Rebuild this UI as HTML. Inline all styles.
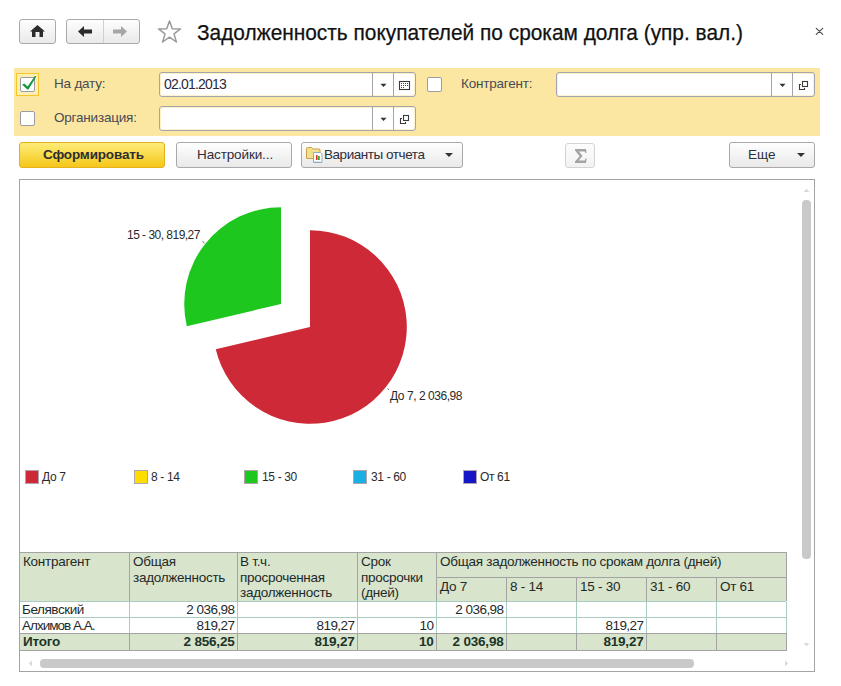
<!DOCTYPE html>
<html><head><meta charset="utf-8">
<style>
*{box-sizing:border-box;margin:0;padding:0}
html,body{width:841px;height:686px;overflow:hidden;background:#fff;font-family:"Liberation Sans",sans-serif;color:#333}
.a{position:absolute}
.btn{position:absolute;border:1px solid #a9a9a9;border-radius:3px;background:linear-gradient(#fefefe,#e9e9e9)}
.t{position:absolute;white-space:nowrap;line-height:1}
.cb{position:absolute;width:15px;height:15px;border:1px solid #9c9ca4;border-radius:2px;background:#fff}
.inp{position:absolute;height:25px;border:1px solid #a4a4ac;border-radius:3px;background:#fff;box-shadow:inset 1px 1px 0 #fdf1c4, inset -1px -1px 0 #fdf3cc}
.sep{position:absolute;width:1px;background:#a4a4ac}
</style></head><body>


<div class="btn" style="left:19px;top:19px;width:37px;height:25px"></div>
<svg class="a" style="left:30px;top:25px" width="15" height="12" viewBox="0 0 15 12">
<path d="M7.5 0 L15 6.5 L13 6.5 L13 12 L9.5 12 L9.5 7 L5.5 7 L5.5 12 L2 12 L2 6.5 L0 6.5 Z" fill="#2b2b2b"/>
</svg>
<div class="btn" style="left:66px;top:19px;width:74px;height:25px"></div>
<div class="a" style="left:103px;top:20px;width:1px;height:23px;background:#d0d0d0"></div>
<svg class="a" style="left:78px;top:26px" width="14" height="11" viewBox="0 0 14 11">
<path d="M0 5.5 L6 0 L6 3.5 L14 3.5 L14 7.5 L6 7.5 L6 11 Z" fill="#2b2b2b"/>
</svg>
<svg class="a" style="left:113px;top:26px" width="14" height="11" viewBox="0 0 14 11">
<path d="M14 5.5 L8 0 L8 3.5 L0 3.5 L0 7.5 L8 7.5 L8 11 Z" fill="#a6a6a6"/>
</svg>
<svg class="a" style="left:157px;top:19px" width="25" height="24" viewBox="0 0 25 24">
<path d="M12.5 2 L15.3 9.8 L23.5 9.9 L17 14.9 L19.4 23 L12.5 18.2 L5.6 23 L8 14.9 L1.5 9.9 L9.7 9.8 Z" fill="none" stroke="#9a9a9a" stroke-width="1.5" stroke-linejoin="round"/>
</svg>
<div class="t" style="left:197px;top:22px;font-size:22px;color:#111;transform:scaleX(0.948);transform-origin:0 0;-webkit-text-stroke:0.25px #111">Задолженность покупателей по срокам долга (упр. вал.)</div>
<svg class="a" style="left:815px;top:27px" width="9" height="9" viewBox="0 0 9 9">
<path d="M1.3 1.4 L7.7 7.4 M7.7 1.4 L1.3 7.4" stroke="#505050" stroke-width="1.25" stroke-linecap="round"/>
</svg>

<div class="a" style="left:14px;top:68px;width:806px;height:68px;background:#fbe7a1"></div>
<div class="a" style="left:16px;top:73px;width:23px;height:23px;border:1px solid #f6c52a;background:#fdeeb4"></div>
<div class="cb" style="left:20px;top:77px"></div>
<div class="cb" style="left:20px;top:111px"></div>
<div class="cb" style="left:427px;top:77px"></div>
<div class="t" style="left:54px;top:77px;font-size:13.5px;color:#4a4a55;letter-spacing:-0.2px">На дату:</div>
<div class="t" style="left:54px;top:111px;font-size:13.5px;color:#4a4a55;letter-spacing:-0.2px">Организация:</div>
<div class="t" style="left:461px;top:77px;font-size:13.5px;color:#4a4a55;letter-spacing:-0.2px">Контрагент:</div>
<div class="inp" style="left:159px;top:72px;width:257px"></div>
<div class="sep" style="left:372px;top:73px;height:23px"></div>
<div class="sep" style="left:393px;top:73px;height:23px"></div>
<div class="inp" style="left:159px;top:106px;width:257px"></div>
<div class="sep" style="left:372px;top:107px;height:23px"></div>
<div class="sep" style="left:393px;top:107px;height:23px"></div>
<div class="inp" style="left:556px;top:72px;width:259px"></div>
<div class="sep" style="left:771px;top:73px;height:23px"></div>
<div class="sep" style="left:792px;top:73px;height:23px"></div>
<div class="t" style="left:164px;top:77px;font-size:14px;color:#2a2a3a;letter-spacing:-0.8px">02.01.2013</div>

<div class="a" style="left:19px;top:142px;width:146px;height:26px;border:1px solid #e3b21c;border-radius:3px;background:linear-gradient(#fdec78,#f5c71a)"></div>
<div class="t" style="left:43px;top:148px;font-size:13.5px;font-weight:bold;color:#2e2e2e;letter-spacing:-0.17px">Сформировать</div>
<div class="btn" style="left:176px;top:142px;width:116px;height:26px"></div>
<div class="t" style="left:197px;top:148px;font-size:13.5px;color:#2e2e3a;letter-spacing:-0.12px">Настройки...</div>
<div class="btn" style="left:301px;top:142px;width:162px;height:26px"></div>
<svg class="a" style="left:305px;top:146px" width="19" height="18" viewBox="0 0 19 18">
 <path d="M1.5 2.5 Q1.5 1.5 2.5 1.5 H6.5 L8 3 H14 Q15 3 15 4 V12.5 H1.5 Z" fill="#f4df8e" stroke="#caa24a"/>
 <path d="M8.5 6.5 H15.5 L17 8 V16.5 H8.5 Z" fill="#fff" stroke="#93aabb"/>
 <rect x="9.5" y="15" width="7" height="1" fill="#d8e4ee"/>
 <rect x="11" y="9" width="1.6" height="5" fill="#e8322c"/><rect x="13" y="10" width="1.8" height="4" fill="#3aaa3a"/>
</svg>
<div class="t" style="left:324px;top:148px;font-size:13.5px;color:#2e2e3a;letter-spacing:-0.45px">Варианты отчета</div>
<div class="a" style="left:445px;top:153px;width:0;height:0;border-left:4px solid transparent;border-right:4px solid transparent;border-top:4px solid #333"></div>
<div class="a" style="left:565px;top:143px;width:30px;height:25px;border:1px solid #d4d4d4;border-radius:3px;background:linear-gradient(#fdfdfd,#f2f2f2)"></div>
<svg class="a" style="left:574px;top:148px" width="14" height="16" viewBox="0 0 14 16"><path d="M1 1 L12 1 L12.6 5 L11.6 5 L10.6 3.4 L5 3.4 L8.6 8 L4.6 12.6 L10.6 12.6 L11.6 10.6 L12.6 10.6 L12 15 L1 15 L1 13.4 L5.6 8.2 L1 2.6 Z" fill="#a4a4a4"/></svg>
<div class="btn" style="left:729px;top:142px;width:86px;height:26px"></div>
<div class="t" style="left:748px;top:148px;font-size:13.5px;color:#2e2e3a">Еще</div>
<div class="a" style="left:797px;top:153px;width:0;height:0;border-left:4px solid transparent;border-right:4px solid transparent;border-top:4px solid #333"></div>
<div class="a" style="left:19px;top:179px;width:796px;height:493px;border:1px solid #a4a4a4"></div>

<div class="t" style="left:127px;top:229px;font-size:12px;color:#2a2a2a;letter-spacing:-0.35px;letter-spacing:-0.52px">15 - 30, 819,27</div>
<div class="t" style="left:390px;top:390px;font-size:12px;color:#2a2a2a;letter-spacing:-0.35px;letter-spacing:-0.45px">До 7, 2 036,98</div>
<div class="a" style="left:25px;top:470px;width:14px;height:14px;background:#cd2936;border:1px solid #b0a4b0"></div>
<div class="t" style="left:42px;top:471px;font-size:12px;color:#2a2a2a;letter-spacing:-0.35px">До 7</div>
<div class="a" style="left:134px;top:470px;width:14px;height:14px;background:#ffdd00;border:1px solid #b0a4b0"></div>
<div class="t" style="left:151px;top:471px;font-size:12px;color:#2a2a2a;letter-spacing:-0.35px">8 - 14</div>
<div class="a" style="left:244px;top:470px;width:14px;height:14px;background:#1dc71d;border:1px solid #b0a4b0"></div>
<div class="t" style="left:262px;top:471px;font-size:12px;color:#2a2a2a;letter-spacing:-0.35px">15 - 30</div>
<div class="a" style="left:353px;top:470px;width:14px;height:14px;background:#1ab0e4;border:1px solid #b0a4b0"></div>
<div class="t" style="left:371px;top:471px;font-size:12px;color:#2a2a2a;letter-spacing:-0.35px">31 - 60</div>
<div class="a" style="left:463px;top:470px;width:14px;height:14px;background:#1616c6;border:1px solid #b0a4b0"></div>
<div class="t" style="left:480px;top:471px;font-size:12px;color:#2a2a2a;letter-spacing:-0.35px">От 61</div>
<div class="a" style="left:20px;top:553px;width:766px;height:48px;background:#d9e4cd"></div>
<div class="a" style="left:20px;top:634px;width:766px;height:16px;background:#d9e4cd"></div>
<div class="a" style="left:19px;top:552px;width:768px;height:1px;background:#a3a3a3"></div>
<div class="a" style="left:436px;top:577px;width:350px;height:1px;background:#a3a3a3"></div>
<div class="a" style="left:20px;top:601px;width:766px;height:1px;background:#a9cbc1"></div>
<div class="a" style="left:20px;top:617px;width:766px;height:1px;background:#a9cbc1"></div>
<div class="a" style="left:19px;top:633px;width:768px;height:1px;background:#a3a3a3"></div>
<div class="a" style="left:19px;top:650px;width:768px;height:1px;background:#a3a3a3"></div>
<div class="a" style="left:129px;top:553px;width:1px;height:48px;background:#a3a3a3"></div>
<div class="a" style="left:129px;top:602px;width:1px;height:31px;background:#a9cbc1"></div>
<div class="a" style="left:129px;top:634px;width:1px;height:16px;background:#a3a3a3"></div>
<div class="a" style="left:237px;top:553px;width:1px;height:48px;background:#a3a3a3"></div>
<div class="a" style="left:237px;top:602px;width:1px;height:31px;background:#a9cbc1"></div>
<div class="a" style="left:237px;top:634px;width:1px;height:16px;background:#a3a3a3"></div>
<div class="a" style="left:357px;top:553px;width:1px;height:48px;background:#a3a3a3"></div>
<div class="a" style="left:357px;top:602px;width:1px;height:31px;background:#a9cbc1"></div>
<div class="a" style="left:357px;top:634px;width:1px;height:16px;background:#a3a3a3"></div>
<div class="a" style="left:436px;top:553px;width:1px;height:48px;background:#a3a3a3"></div>
<div class="a" style="left:436px;top:602px;width:1px;height:31px;background:#a9cbc1"></div>
<div class="a" style="left:436px;top:634px;width:1px;height:16px;background:#a3a3a3"></div>
<div class="a" style="left:506px;top:578px;width:1px;height:23px;background:#a3a3a3"></div>
<div class="a" style="left:506px;top:602px;width:1px;height:31px;background:#a9cbc1"></div>
<div class="a" style="left:506px;top:634px;width:1px;height:16px;background:#a3a3a3"></div>
<div class="a" style="left:576px;top:578px;width:1px;height:23px;background:#a3a3a3"></div>
<div class="a" style="left:576px;top:602px;width:1px;height:31px;background:#a9cbc1"></div>
<div class="a" style="left:576px;top:634px;width:1px;height:16px;background:#a3a3a3"></div>
<div class="a" style="left:646px;top:578px;width:1px;height:23px;background:#a3a3a3"></div>
<div class="a" style="left:646px;top:602px;width:1px;height:31px;background:#a9cbc1"></div>
<div class="a" style="left:646px;top:634px;width:1px;height:16px;background:#a3a3a3"></div>
<div class="a" style="left:716px;top:578px;width:1px;height:23px;background:#a3a3a3"></div>
<div class="a" style="left:716px;top:602px;width:1px;height:31px;background:#a9cbc1"></div>
<div class="a" style="left:716px;top:634px;width:1px;height:16px;background:#a3a3a3"></div>
<div class="a" style="left:786px;top:553px;width:1px;height:48px;background:#a3a3a3"></div>
<div class="a" style="left:786px;top:602px;width:1px;height:31px;background:#a9cbc1"></div>
<div class="a" style="left:786px;top:634px;width:1px;height:16px;background:#a3a3a3"></div>
<div class="t" style="left:23px;top:555px;font-size:13.5px;color:#1e2a2a;letter-spacing:-0.27px;">Контрагент</div>
<div class="t" style="left:133px;top:555px;font-size:13.5px;color:#1e2a2a;letter-spacing:-0.27px;">Общая</div>
<div class="t" style="left:133px;top:571px;font-size:13.5px;color:#1e2a2a;letter-spacing:-0.27px;">задолженность</div>
<div class="t" style="left:240px;top:555px;font-size:13.5px;color:#1e2a2a;letter-spacing:-0.27px;">В т.ч.</div>
<div class="t" style="left:240px;top:571px;font-size:13.5px;color:#1e2a2a;letter-spacing:-0.27px;">просроченная</div>
<div class="t" style="left:240px;top:586px;font-size:13.5px;color:#1e2a2a;letter-spacing:-0.27px;">задолженность</div>
<div class="t" style="left:361px;top:555px;font-size:13.5px;color:#1e2a2a;letter-spacing:-0.27px;">Срок</div>
<div class="t" style="left:361px;top:571px;font-size:13.5px;color:#1e2a2a;letter-spacing:-0.27px;">просрочки</div>
<div class="t" style="left:361px;top:586px;font-size:13.5px;color:#1e2a2a;letter-spacing:-0.27px;">(дней)</div>
<div class="t" style="left:440px;top:555px;font-size:13.5px;color:#1e2a2a;letter-spacing:-0.27px;">Общая задолженность по срокам долга (дней)</div>
<div class="t" style="left:440px;top:580px;font-size:13.5px;color:#1e2a2a;letter-spacing:-0.27px;">До 7</div>
<div class="t" style="left:510px;top:580px;font-size:13.5px;color:#1e2a2a;letter-spacing:-0.27px;">8 - 14</div>
<div class="t" style="left:580px;top:580px;font-size:13.5px;color:#1e2a2a;letter-spacing:-0.27px;">15 - 30</div>
<div class="t" style="left:650px;top:580px;font-size:13.5px;color:#1e2a2a;letter-spacing:-0.27px;">31 - 60</div>
<div class="t" style="left:720px;top:580px;font-size:13.5px;color:#1e2a2a;letter-spacing:-0.27px;">От 61</div>
<div class="t" style="left:22px;top:603px;font-size:13.5px;color:#1e2a2a;letter-spacing:-0.27px;;letter-spacing:-0.45px">Белявский</div>
<div class="t" style="right:606.5px;top:603px;font-size:13.5px;color:#1e2a2a;letter-spacing:-0.27px;;letter-spacing:-0.55px">2 036,98</div>
<div class="t" style="right:337.5px;top:603px;font-size:13.5px;color:#1e2a2a;letter-spacing:-0.27px;;letter-spacing:-0.55px">2 036,98</div>
<div class="t" style="left:22px;top:619px;font-size:13.5px;color:#1e2a2a;letter-spacing:-0.27px;;letter-spacing:-1px">Алхимов А.А.</div>
<div class="t" style="right:606.5px;top:619px;font-size:13.5px;color:#1e2a2a;letter-spacing:-0.27px;;letter-spacing:-0.55px">819,27</div>
<div class="t" style="right:486.5px;top:619px;font-size:13.5px;color:#1e2a2a;letter-spacing:-0.27px;;letter-spacing:-0.55px">819,27</div>
<div class="t" style="right:407.5px;top:619px;font-size:13.5px;color:#1e2a2a;letter-spacing:-0.27px;;letter-spacing:-0.55px">10</div>
<div class="t" style="right:197.5px;top:619px;font-size:13.5px;color:#1e2a2a;letter-spacing:-0.27px;;letter-spacing:-0.55px">819,27</div>
<div class="t" style="left:23px;top:635px;font-size:13.5px;color:#1e2a2a;letter-spacing:-0.27px;font-weight:bold;letter-spacing:-0.2px;color:#1b3428">Итого</div>
<div class="t" style="right:606.5px;top:635px;font-size:13.5px;color:#1e2a2a;letter-spacing:-0.27px;font-weight:bold;letter-spacing:-0.2px;color:#1b3428">2 856,25</div>
<div class="t" style="right:486.5px;top:635px;font-size:13.5px;color:#1e2a2a;letter-spacing:-0.27px;font-weight:bold;letter-spacing:-0.2px;color:#1b3428">819,27</div>
<div class="t" style="right:407.5px;top:635px;font-size:13.5px;color:#1e2a2a;letter-spacing:-0.27px;font-weight:bold;letter-spacing:-0.2px;color:#1b3428">10</div>
<div class="t" style="right:337.5px;top:635px;font-size:13.5px;color:#1e2a2a;letter-spacing:-0.27px;font-weight:bold;letter-spacing:-0.2px;color:#1b3428">2 036,98</div>
<div class="t" style="right:197.5px;top:635px;font-size:13.5px;color:#1e2a2a;letter-spacing:-0.27px;font-weight:bold;letter-spacing:-0.2px;color:#1b3428">819,27</div>
<div class="a" style="left:802px;top:200px;width:9px;height:359px;border-radius:4px;background:#c9c9c9"></div>
<div class="a" style="left:40px;top:659px;width:654px;height:9px;border-radius:4px;background:#c9c9c9"></div>
<svg class="a" style="left:0;top:0" width="841" height="686" viewBox="0 0 841 686"><path d="M380.5 83.8 H386.5 L383.5 87.0 Z" fill="#333"/>
<path d="M380.5 117.8 H386.5 L383.5 121.0 Z" fill="#333"/>
<path d="M779.5 83.8 H785.5 L782.5 87.0 Z" fill="#333"/>
<rect x="399.5" y="81.5" width="10" height="8" fill="#fff" stroke="#3a3a3a" stroke-width="1.1"/>
<rect x="401" y="83" width="1" height="1" fill="#444"/>
<rect x="401" y="85" width="1" height="1" fill="#444"/>
<rect x="403" y="83" width="1" height="1" fill="#444"/>
<rect x="403" y="85" width="1" height="1" fill="#444"/>
<rect x="405" y="83" width="1" height="1" fill="#444"/>
<rect x="405" y="85" width="1" height="1" fill="#444"/>
<rect x="407" y="83" width="1" height="1" fill="#444"/>
<rect x="407" y="85" width="1" height="1" fill="#444"/>
<rect x="401" y="87" width="1" height="1" fill="#444"/>
<rect x="403" y="87" width="1" height="1" fill="#444"/>
<rect x="403.5" y="115.5" width="5" height="5" fill="none" stroke="#3a3a3a" stroke-width="1.1"/>
<path d="M402 118.5 H400.5 V123.5 H405.5 V122" fill="none" stroke="#3a3a3a" stroke-width="1.1"/>
<rect x="802.5" y="81.5" width="5" height="5" fill="none" stroke="#3a3a3a" stroke-width="1.1"/>
<path d="M801 84.5 H799.5 V89.5 H804.5 V88" fill="none" stroke="#3a3a3a" stroke-width="1.1"/>
<path d="M22 84.6 L24.6 83.7 L27.6 86.5 L35 75.8 L36.2 76.8 L28.4 89.6 L27.3 89.6 Z" fill="#16973e"/>
<path d="M310 327 L310.00 230.20 A96.8 96.8 0 1 1 215.78 349.20 Z" fill="#cd2936"/>
<path d="M281 304 L281.00 207.20 A96.8 96.8 0 0 0 186.78 326.20 Z" fill="#1dc71d"/>
<path d="M202.5 241.5 L204.5 243" stroke="#666" stroke-width="1"/>
<path d="M387.5 388.5 L389 390" stroke="#666" stroke-width="1"/>
<path d="M803.5 192 L806.5 188.8 L809.5 192 Z" fill="#dadada"/>
<path d="M803.5 643 L806.5 646.2 L809.5 643 Z" fill="#dadada"/>
<path d="M32 660.5 L28.8 663.5 L32 666.5 Z" fill="#dadada"/>
<path d="M785 660.5 L788.2 663.5 L785 666.5 Z" fill="#dadada"/></svg>
</body></html>
